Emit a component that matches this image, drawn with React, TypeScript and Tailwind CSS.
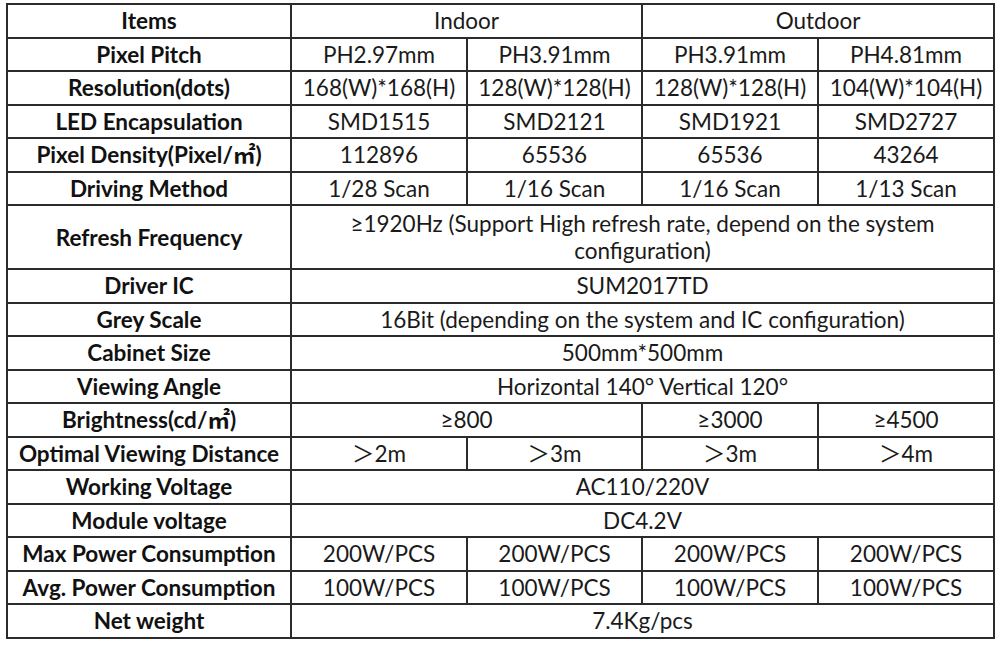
const FONT = { fontFamily: "Lato, 'Noto Sans CJK SC', sans-serif" };

type Cell = { text: React.ReactNode; span?: number };
type Row = { label: string; cells: Cell[]; tall?: boolean };

const ROWS: Row[] = [
  { label: "Pixel Pitch", cells: [{ text: "PH2.97mm" }, { text: "PH3.91mm" }, { text: "PH3.91mm" }, { text: "PH4.81mm" }] },
  { label: "Resolution(dots)", cells: [{ text: "168(W)*168(H)" }, { text: "128(W)*128(H)" }, { text: "128(W)*128(H)" }, { text: "104(W)*104(H)" }] },
  { label: "LED Encapsulation", cells: [{ text: "SMD1515" }, { text: "SMD2121" }, { text: "SMD1921" }, { text: "SMD2727" }] },
  { label: "Pixel Density(Pixel/㎡)", cells: [{ text: "112896" }, { text: "65536" }, { text: "65536" }, { text: "43264" }] },
  { label: "Driving Method", cells: [{ text: "1/28 Scan" }, { text: "1/16 Scan" }, { text: "1/16 Scan" }, { text: "1/13 Scan" }] },
  {
    label: "Refresh Frequency",
    tall: true,
    cells: [
      {
        text: (
          <>
            ≥1920Hz (Support High refresh rate, depend on the system
            <br />
            configuration)
          </>
        ),
        span: 4,
      },
    ],
  },
  { label: "Driver IC", cells: [{ text: "SUM2017TD", span: 4 }] },
  { label: "Grey Scale", cells: [{ text: "16Bit (depending on the system and IC configuration)", span: 4 }] },
  { label: "Cabinet Size", cells: [{ text: "500mm*500mm", span: 4 }] },
  { label: "Viewing Angle", cells: [{ text: "Horizontal 140° Vertical 120°", span: 4 }] },
  { label: "Brightness(cd/㎡)", cells: [{ text: "≥800", span: 2 }, { text: "≥3000" }, { text: "≥4500" }] },
  { label: "Optimal Viewing Distance", cells: [{ text: "＞2m" }, { text: "＞3m" }, { text: "＞3m" }, { text: "＞4m" }] },
  { label: "Working Voltage", cells: [{ text: "AC110/220V", span: 4 }] },
  { label: "Module voltage", cells: [{ text: "DC4.2V", span: 4 }] },
  { label: "Max Power Consumption", cells: [{ text: "200W/PCS" }, { text: "200W/PCS" }, { text: "200W/PCS" }, { text: "200W/PCS" }] },
  { label: "Avg. Power Consumption", cells: [{ text: "100W/PCS" }, { text: "100W/PCS" }, { text: "100W/PCS" }, { text: "100W/PCS" }] },
  { label: "Net weight", cells: [{ text: "7.4Kg/pcs", span: 4 }] },
];

const td = "border-2 border-[#2b2b2b] text-center align-middle p-0 leading-[1.2] whitespace-nowrap";

export default function App() {
  return (
    <div className="w-[1000px] h-[647px] bg-white pt-[3px] pl-[6px]" style={FONT}>
      <table className="border-collapse table-fixed w-[987px] text-[22.5px] text-[#1a1a1a]">
        <colgroup>
          <col className="w-[284px]" />
          <col className="w-[176px]" />
          <col className="w-[175px]" />
          <col className="w-[176px]" />
          <col className="w-[176px]" />
        </colgroup>
        <tbody>
          <tr className="h-[33.5px]">
            <td className={`${td} font-bold text-[#111]`}>Items</td>
            <td className={td} colSpan={2}>Indoor</td>
            <td className={td} colSpan={2}>Outdoor</td>
          </tr>
          {ROWS.map((row) => (
            <tr key={row.label} className={row.tall ? "h-[64px]" : "h-[33.5px]"}>
              <td className={`${td} font-bold text-[#111]`}>{row.label}</td>
              {row.cells.map((c, i) => (
                <td key={i} className={td} colSpan={c.span ?? 1}>
                  {c.text}
                </td>
              ))}
            </tr>
          ))}
        </tbody>
      </table>
    </div>
  );
}
